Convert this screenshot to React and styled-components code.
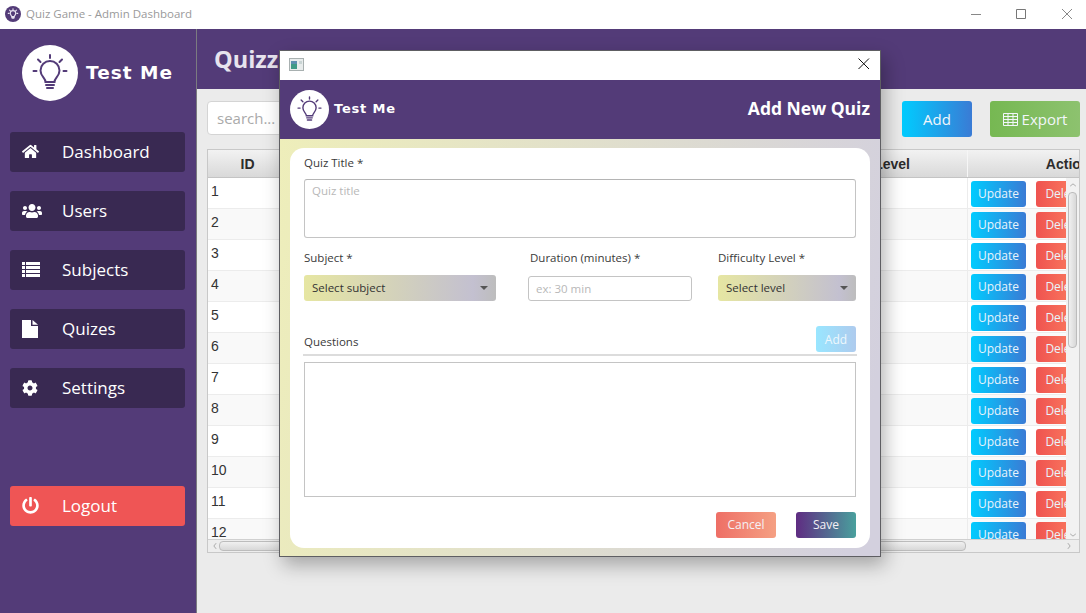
import React from "react";
import styled, { createGlobalStyle } from "styled-components";
import { FaHome, FaUsers, FaCog, FaPowerOff } from "react-icons/fa";

const Global = createGlobalStyle`
  html, body { margin: 0; padding: 0; background: #ebebeb; }
  * { box-sizing: border-box; }
  body { font-family: "Open Sans", "Noto Sans", sans-serif; }
`;

const purple = "#533b78";

const Page = styled.div`
  position: relative;
  width: 1086px;
  height: 613px;
  overflow: hidden;
  display: flex;
  flex-direction: column;
`;

const TitleBar = styled.div`
  height: 29px;
  flex: none;
  background: #fff;
  display: flex;
  align-items: center;
  padding-left: 5px;
  padding-bottom: 2px;
  color: #9a9a9a;
  font-size: 11.5px;
`;

const TitleText = styled.span`
  margin-left: 5px;
  flex: 1;
`;

const WinButton = styled.div`
  width: ${(p) => p.$w}px;
  height: 27px;
  flex: none;
  display: flex;
  align-items: center;
  justify-content: center;
`;

const Main = styled.div`
  flex: 1;
  display: flex;
  min-height: 0;
`;

const Sidebar = styled.aside`
  width: 197px;
  flex: none;
  background: ${purple};
  border-right: 1px solid #7b7b80;
  padding: 16px 11px 0 10px;
  display: flex;
  flex-direction: column;
`;

const Brand = styled.div`
  display: flex;
  align-items: center;
  gap: 8px;
  padding-left: 12px;
  margin-bottom: 31px;
`;

const BrandText = styled.span`
  font-family: "DejaVu Sans", sans-serif;
  font-weight: 700;
  font-size: ${(p) => p.$size}px;
  letter-spacing: ${(p) => p.$spacing}px;
  color: #fff;
  white-space: nowrap;
  padding-bottom: ${(p) => p.$lift || 0}px;
`;

const NavItem = styled.div`
  height: 40px;
  width: 175px;
  flex: none;
  border-radius: 3px;
  background: ${(p) => (p.$logout ? "#ef5555" : "#392952")};
  color: #fff;
  font-size: 17px;
  padding-bottom: 1px;
  display: flex;
  align-items: center;
  margin-bottom: ${(p) => (p.$gap ? p.$gap : 19)}px;
`;

const NavIcon = styled.span`
  width: 52px;
  flex: none;
  padding-left: 12px;
  display: flex;
  align-items: center;
  font-size: ${(p) => p.$size || 17}px;
`;

const Content = styled.main`
  flex: 1;
  min-width: 0;
  display: flex;
  flex-direction: column;
`;

const Header = styled.header`
  height: 60px;
  flex: none;
  background: ${purple};
  color: #e7e3ee;
  font-size: 23.5px;
  font-weight: 700;
  padding-left: 17px;
  display: flex;
  align-items: center;
`;

const Toolbar = styled.div`
  display: flex;
  align-items: flex-start;
  padding: 12px 6px 0 10px;
  height: 60px;
  flex: none;
`;

const Search = styled.div`
  width: 200px;
  height: 34px;
  background: #fff;
  border: 1px solid #d4d4d4;
  border-radius: 4px;
  color: #aaa;
  font-size: 15px;
  padding: 0 9px;
  display: flex;
  align-items: center;
`;

const ToolButton = styled.div`
  height: 36px;
  width: ${(p) => p.$w}px;
  margin-left: ${(p) => p.$ml}px;
  border-radius: 3px;
  color: #f2f6fb;
  font-size: 15px;
  display: flex;
  align-items: center;
  justify-content: center;
  gap: 4px;
  background: ${(p) => p.$bg};
`;

const Table = styled.div`
  margin-left: 10px;
  width: 873px;
  height: 404px;
  border: 1px solid #c8c8c8;
  display: flex;
  flex-direction: column;
  background: #f4f4f4;
  overflow: hidden;
`;

const HeadRow = styled.div`
  height: 28px;
  flex: none;
  display: grid;
  grid-template-columns: 80px 680px 212px;
  border-bottom: 1px solid #c4c4c4;
`;

const HeadCell = styled.div`
  background: linear-gradient(#f2f2f2, #d9d9d9);
  border-right: 1px solid #f6f6f6;
  font-family: "Liberation Sans", sans-serif;
  font-weight: 700;
  font-size: 14px;
  color: #2c2c2c;
  display: flex;
  align-items: center;
  justify-content: ${(p) => p.$justify || "center"};
  padding-right: ${(p) => p.$pr || 0}px;
`;

const TableBody = styled.div`
  flex: 1;
  min-height: 0;
  display: flex;
`;

const Rows = styled.div`
  flex: 1;
  min-width: 0;
  overflow: hidden;
`;

const Row = styled.div`
  height: 31px;
  display: grid;
  grid-template-columns: 80px 680px 212px;
  background: ${(p) => (p.$odd ? "#f9f9f9" : "#fff")};
  border-bottom: 1px solid #ececec;
`;

const IdCell = styled.div`
  font-family: "Liberation Sans", sans-serif;
  font-size: 14px;
  color: #333;
  padding: 5px 0 0 3px;
`;

const EmptyCell = styled.div`
  border-right: 1px solid #ececec;
`;

const Actions = styled.div`
  display: flex;
  gap: 10px;
  padding: 3px 0 0 3px;
`;

const RowButton = styled.div`
  width: 55px;
  height: 26px;
  flex: none;
  border-radius: 3px;
  color: #e9f4fb;
  font-size: 12px;
  padding-bottom: 1px;
  display: flex;
  align-items: center;
  justify-content: center;
  background: ${(p) => p.$bg};
`;

const VScroll = styled.div`
  width: 13px;
  flex: none;
  background: #f2f2f2;
  display: flex;
  flex-direction: column;
  align-items: center;
  padding-top: 3px;
`;

const VThumb = styled.div`
  width: 9px;
  height: 156px;
  margin-top: 3px;
  border: 1px solid #bcbcbc;
  border-radius: 4px;
  background: linear-gradient(90deg, #f0f0f0, #d8d8d8);
`;

const Spring = styled.div`
  flex: 1;
`;

const HScroll = styled.div`
  height: 13px;
  flex: none;
  background: #ededed;
  border-top: 1px solid #d0d0d0;
  display: flex;
  align-items: center;
  padding: 0 6px 0 3px;
`;

const HThumb = styled.div`
  width: 747px;
  height: 10px;
  border: 1px solid #bcbcbc;
  border-radius: 4px;
  background: linear-gradient(#f0f0f0, #d8d8d8);
`;

/* dialog window sitting over the dashboard */
const Dialog = styled.div`
  position: absolute;
  left: 279px;
  top: 50px;
  width: 602px;
  height: 507px;
  border: 1px solid #5e5e62;
  background: #fff;
  box-shadow: 4px 8px 18px rgba(0, 0, 0, 0.3);
  display: flex;
  flex-direction: column;
`;

const DialogBar = styled.div`
  height: 29px;
  flex: none;
  background: #fff;
  display: flex;
  align-items: center;
  justify-content: space-between;
  padding: 0 9px 3px 9px;
`;

const DialogHead = styled.div`
  height: 59px;
  flex: none;
  background: ${purple};
  display: flex;
  align-items: center;
  padding: 0 10px;
  gap: 5px;
`;

const DialogTitle = styled.div`
  margin-left: auto;
  color: #fff;
  font-size: 17.5px;
  font-weight: 700;
  padding-bottom: 4px;
`;

const DialogBody = styled.div`
  flex: 1;
  min-height: 0;
  padding: 9px 10px 8px;
  background: linear-gradient(100deg, #eeeeba, #d3d0de 95%);
`;

const Card = styled.div`
  height: 100%;
  background: #fff;
  border-radius: 14px;
  padding: 7px 14px 0;
  display: flex;
  flex-direction: column;
`;

const Label = styled.div`
  font-size: 11.5px;
  line-height: 16px;
  color: #3a3a3a;
  margin-left: ${(p) => p.$ml || 0}px;
  margin-bottom: ${(p) => p.$mb || 0}px;
`;

const TitleInput = styled.div`
  height: 59px;
  margin-top: 8px;
  border: 1px solid #c4c4c4;
  border-top-color: #b4b4b4;
  border-radius: 3px;
  padding: 3px 7px;
  color: #b8b8b8;
  font-size: 11.5px;
`;

const FieldRow = styled.div`
  display: flex;
  margin-top: 12px;
`;

const Field = styled.div`
  width: ${(p) => p.$w}px;
  margin-left: ${(p) => p.$ml || 0}px;
  display: flex;
  flex-direction: column;
`;

const Select = styled.div`
  height: 26px;
  margin-top: 9px;
  border-radius: 3px;
  background: linear-gradient(90deg, #e6e6a2, #c3c0d0 88%, #bdbdbd);
  color: #333;
  font-size: 11.5px;
  padding-bottom: 1px;
  display: flex;
  align-items: center;
  justify-content: space-between;
  padding-left: 8px;
  padding-right: 8px;
`;

const Caret = styled.span`
  width: 0;
  height: 0;
  border-left: 4px solid transparent;
  border-right: 4px solid transparent;
  border-top: 4px solid #555;
`;

const TextInput = styled.div`
  height: 25px;
  margin-top: 10px;
  border: 1px solid #c4c4c4;
  border-radius: 3px;
  padding: 0 7px;
  color: #b8b8b8;
  font-size: 11.5px;
  display: flex;
  align-items: center;
`;

const QuestionsHead = styled.div`
  display: flex;
  align-items: flex-end;
  justify-content: space-between;
  margin-top: 25px;
  padding-bottom: 2px;
  margin-left: -1px;
  margin-right: -1px;
  padding-right: 1px;
  border-bottom: 2px solid #dcdcdc;
`;

const QuestionsAdd = styled.div`
  width: 40px;
  height: 26px;
  border-radius: 3px;
  background: linear-gradient(90deg, #99e6ff, #aecbee);
  color: #eef8fd;
  font-size: 12px;
  display: flex;
  align-items: center;
  justify-content: center;
`;

const QuestionsBox = styled.div`
  height: 135px;
  margin-top: 6px;
  border: 1px solid #c4c4c4;
`;

const Footer = styled.div`
  display: flex;
  justify-content: flex-end;
  gap: 20px;
  margin-top: 15px;
`;

const FootButton = styled.div`
  width: 60px;
  height: 26px;
  border-radius: 3px;
  background: ${(p) => p.$bg};
  color: #f4f0f4;
  font-size: 12px;
  padding-bottom: 1px;
  display: flex;
  align-items: center;
  justify-content: center;
`;

const Bulb = ({ size, invert }) => {
  const disc = invert ? purple : "#fff";
  const ink = invert ? "#e8e2f0" : purple;
  return (
    <svg width={size} height={size} viewBox="0 0 56 56" style={{ flex: "none", display: "block" }}>
      <circle cx="28" cy="28" r="28" fill={disc} />
      <g fill="none" stroke={ink} strokeWidth={invert ? 4 : 2} strokeLinecap="round">
        <path d="M23.5 37 C23.5 33 18.5 31.5 18.5 25.5 A9.5 9.5 0 0 1 37.5 25.5 C37.5 31.5 32.5 33 32.5 37 Z" />
        <path d="M24 40 H32 M25 43 H31" />
        <path d="M28 10 V13 M16 14.5 L18.5 17 M40 14.5 L37.5 17 M11.5 26 H14.5 M41.5 26 H44.5" />
      </g>
    </svg>
  );
};

const WindowIcon = () => (
  <svg width="15" height="13" viewBox="0 0 15 13" style={{ display: "block" }}>
    <rect x="0.5" y="0.5" width="14" height="12" fill="#e8ecec" stroke="#a8b0b0" />
    <rect x="2" y="3" width="6" height="8" fill="#3f9a86" />
    <rect x="2" y="3" width="6" height="3" fill="#5d8fb0" />
    <rect x="10" y="3" width="3" height="3" fill="#c9d4d4" />
  </svg>
);

const Line = ({ d, color, size = 14 }) => (
  <svg width={size} height={size} viewBox="0 0 14 14" style={{ display: "block" }}>
    <path d={d} fill="none" stroke={color} strokeWidth="1" />
  </svg>
);

const ListIcon = () => (
  <svg width="18" height="15" viewBox="0 0 18 15" fill="#fff" style={{ display: "block" }}>
    {[0, 4, 8, 12].map((y) => (
      <g key={y}>
        <rect x="0" y={y} width="3" height="3" />
        <rect x="4" y={y} width="14" height="3" />
      </g>
    ))}
  </svg>
);

const FileIcon = () => (
  <svg width="16" height="18" viewBox="0 0 16 18" fill="#fff" style={{ display: "block" }}>
    <path d="M0 0 H9 V6 H16 V18 H0 Z" />
    <path d="M10.5 0 L16 4.8 H10.5 Z" />
  </svg>
);

const GridIcon = () => (
  <svg width="15" height="13" viewBox="0 0 15 13" fill="none" stroke="#f2f6fb" strokeWidth="1" style={{ display: "block" }}>
    <path d="M0.5 0.5 H14.5 V12.5 H0.5 Z M0.5 3.5 H14.5 M0.5 6.5 H14.5 M0.5 9.5 H14.5 M5 0.5 V12.5 M10 0.5 V12.5" />
  </svg>
);

const navItems = [
  ["Dashboard", <FaHome />, 17],
  ["Users", <FaUsers />, 20],
  ["Subjects", <ListIcon />],
  ["Quizes", <FileIcon />],
  ["Settings", <FaCog />, 16],
];

const updateBg = "linear-gradient(90deg, #00ccff, #3a7bd5)";
const deleteBg = "linear-gradient(90deg, #ef5350, #ff8a65)";

const rows = [1, 2, 3, 4, 5, 6, 7, 8, 9, 10, 11, 12];

export default function App() {
  return (
    <Page>
      <Global />
      <TitleBar>
        <Bulb size={16} invert />
        <TitleText>Quiz Game - Admin Dashboard</TitleText>
        <WinButton $w={38}><Line color="#888" d="M2 7.5 H12" /></WinButton>
        <WinButton $w={52}><Line color="#777" d="M2.5 2.5 H11.5 V11.5 H2.5 Z" /></WinButton>
        <WinButton $w={39}><Line color="#888" d="M2 2 L12 12 M12 2 L2 12" /></WinButton>
      </TitleBar>
      <Main>
        <Sidebar>
          <Brand>
            <Bulb size={56} />
            <BrandText $size={18.5} $spacing={1} $lift={2}>Test Me</BrandText>
          </Brand>
          {navItems.map(([name, icon, size], i) => (
            <NavItem key={name} $gap={i === 4 ? 78 : 19}>
              <NavIcon $size={size}>{icon}</NavIcon>
              {name}
            </NavItem>
          ))}
          <NavItem $logout>
            <NavIcon><FaPowerOff /></NavIcon>
            Logout
          </NavItem>
        </Sidebar>
        <Content>
          <Header>Quizzes</Header>
          <Toolbar>
            <Search>search...</Search>
            <ToolButton $w={70} $ml={495} $bg={updateBg}>Add</ToolButton>
            <ToolButton $w={90} $ml={18} $bg="linear-gradient(90deg, #76b852, #8dc26f)">
              <GridIcon /> Export
            </ToolButton>
          </Toolbar>
          <Table>
            <HeadRow>
              <HeadCell>ID</HeadCell>
              <HeadCell $justify="flex-end" $pr={57}>Level</HeadCell>
              <HeadCell $pr={4}>Actions</HeadCell>
            </HeadRow>
            <TableBody>
              <Rows>
                {rows.map((n, i) => (
                  <Row key={n} $odd={i % 2 === 1}>
                    <IdCell>{n}</IdCell>
                    <EmptyCell />
                    <Actions>
                      <RowButton $bg={updateBg}>Update</RowButton>
                      <RowButton $bg={deleteBg}>Delete</RowButton>
                    </Actions>
                  </Row>
                ))}
              </Rows>
              <VScroll>
                <Line color="#777" size={8} d="M2 9 L7 5 L12 9" />
                <VThumb />
                <Spring />
                <Line color="#777" size={8} d="M2 5 L7 9 L12 5" />
              </VScroll>
            </TableBody>
            <HScroll>
              <Line color="#777" size={8} d="M9 2 L5 7 L9 12" />
              <HThumb />
              <Spring />
              <Line color="#777" size={8} d="M5 2 L9 7 L5 12" />
            </HScroll>
          </Table>
        </Content>
      </Main>
      <Dialog>
        <DialogBar>
          <WindowIcon />
          <Line color="#111" d="M1.5 1.5 L12 12 M12 1.5 L1.5 12" />
        </DialogBar>
        <DialogHead>
          <Bulb size={39} />
          <BrandText $size={13} $spacing={0.8} $lift={2}>Test Me</BrandText>
          <DialogTitle>Add New Quiz</DialogTitle>
        </DialogHead>
        <DialogBody>
          <Card>
            <Label>Quiz Title *</Label>
            <TitleInput>Quiz title</TitleInput>
            <FieldRow>
              <Field $w={192}>
                <Label>Subject *</Label>
                <Select>Select subject<Caret /></Select>
              </Field>
              <Field $w={164} $ml={32}>
                <Label $ml={2}>Duration (minutes) *</Label>
                <TextInput>ex: 30 min</TextInput>
              </Field>
              <Field $w={138} $ml={26}>
                <Label>Difficulty Level *</Label>
                <Select>Select level<Caret /></Select>
              </Field>
            </FieldRow>
            <QuestionsHead>
              <Label $ml={1} $mb={2}>Questions</Label>
              <QuestionsAdd>Add</QuestionsAdd>
            </QuestionsHead>
            <QuestionsBox />
            <Footer>
              <FootButton $bg="linear-gradient(90deg, #ee6f66, #f5a083)">Cancel</FootButton>
              <FootButton $bg="linear-gradient(90deg, #5f2c82, #49a09d)">Save</FootButton>
            </Footer>
          </Card>
        </DialogBody>
      </Dialog>
    </Page>
  );
}
